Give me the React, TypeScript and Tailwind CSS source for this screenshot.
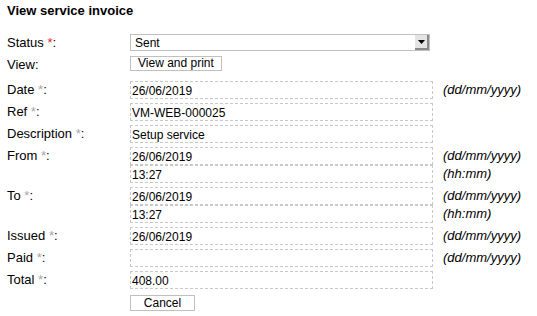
const font = { fontFamily: '"Liberation Sans", Arial, sans-serif' };

function Req({ red }: { red?: boolean }) {
  return <span className={red ? "text-[#e0242c]" : "text-[#a6a6a6]"}>*</span>;
}

function Field({ value }: { value: string }) {
  return (
    <div className="h-[18px] w-[303px] border border-dashed border-[#c8c8c8] pl-[1px] pt-[1px] text-[12px] leading-[16px] text-black">
      {value}
    </div>
  );
}

function Hint({ text }: { text: string }) {
  return <div className="h-[18px] pl-[10px] text-[13px] italic leading-[18px]">{text}</div>;
}

function Row({
  label,
  red,
  children,
  hints,
  mt = "mt-[4px]",
}: {
  label: string;
  red?: boolean;
  children: React.ReactNode;
  hints?: string[];
  mt?: string;
}) {
  return (
    <div className={`flex ${mt}`}>
      <div className="w-[123px] text-[13px] leading-[18px]">
        {label} <Req red={red} />:
      </div>
      <div className="flex flex-col">{children}</div>
      {hints && (
        <div className="flex flex-col">
          {hints.map((h, i) => (
            <Hint key={i} text={h} />
          ))}
        </div>
      )}
    </div>
  );
}

export default function App() {
  return (
    <div className="h-[316px] w-[537px] bg-white pl-[7px] text-black" style={font}>
      <h1 className="pt-[3px] text-[13px] font-bold leading-[16px]">View service invoice</h1>
      <div className="mt-[15px]">
        <div className="flex">
          <div className="w-[123px] text-[13px] leading-[18px]">
            Status <Req red />:
          </div>
          <div className="flex h-[17px] w-[300px] items-center border border-[#c0c0c0] text-[12px]">
            <span className="flex-1 pl-[4px]">Sent</span>
            <span className="flex h-[15px] w-[14px] items-center justify-center border-r-2 border-b-2 border-[#8a8a8a] bg-[#e4e4e4]">
              <svg width="7" height="4" viewBox="0 0 7 4">
                <path d="M0 0h7L3.5 4z" fill="#000" />
              </svg>
            </span>
          </div>
        </div>
        <div className="mt-[4px] flex">
          <div className="w-[123px] text-[13px] leading-[18px]">View:</div>
          <button className="h-[15px] border border-[#c0c0c0] bg-white px-[7px] text-[12px] leading-[13px]">
            View and print
          </button>
        </div>
        <Row label="Date" hints={["(dd/mm/yyyy)"]} mt="mt-[7px]">
          <Field value="26/06/2019" />
        </Row>
        <Row label="Ref">
          <Field value="VM-WEB-000025" />
        </Row>
        <Row label="Description">
          <Field value="Setup service" />
        </Row>
        <Row label="From" hints={["(dd/mm/yyyy)", "(hh:mm)"]}>
          <Field value="26/06/2019" />
          <Field value="13:27" />
        </Row>
        <Row label="To" hints={["(dd/mm/yyyy)", "(hh:mm)"]}>
          <Field value="26/06/2019" />
          <Field value="13:27" />
        </Row>
        <Row label="Issued" hints={["(dd/mm/yyyy)"]}>
          <Field value="26/06/2019" />
        </Row>
        <Row label="Paid" hints={["(dd/mm/yyyy)"]}>
          <Field value="" />
        </Row>
        <Row label="Total">
          <Field value="408.00" />
        </Row>
        <div className="mt-[6px] flex pl-[123px]">
          <button className="h-[16px] w-[65px] border border-[#c0c0c0] bg-white text-[12px] leading-[14px]">
            Cancel
          </button>
        </div>
      </div>
    </div>
  );
}
